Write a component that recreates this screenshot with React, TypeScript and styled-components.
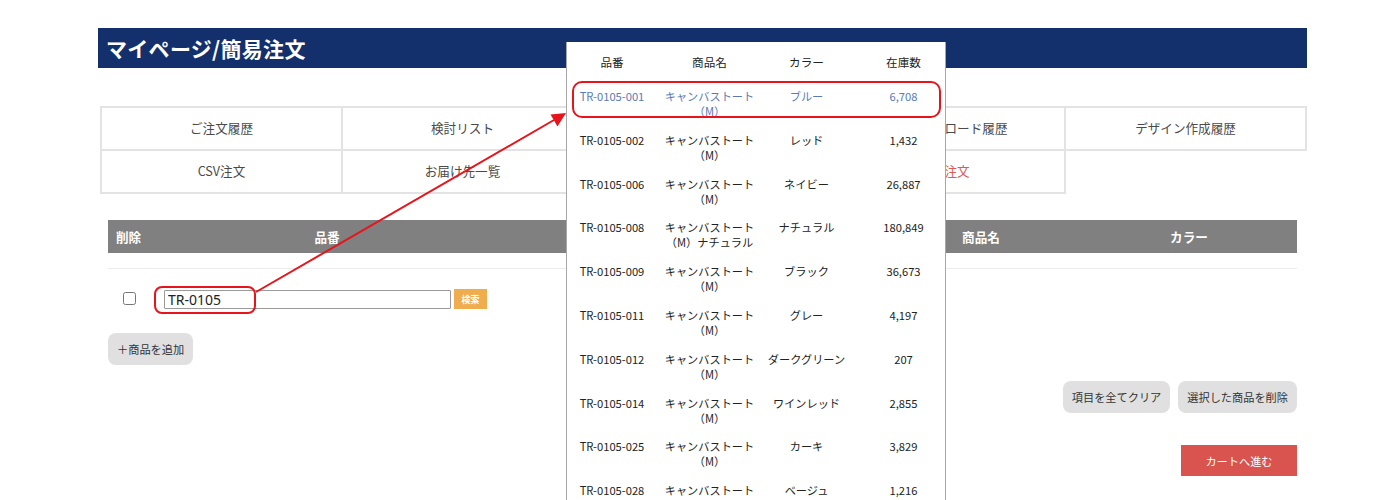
import React from "react";
import styled, { createGlobalStyle } from "styled-components";

const GlobalStyle = createGlobalStyle`
  html, body { margin: 0; padding: 0; background: #fff; overflow: hidden; }
  body { font-family: "Noto Sans CJK JP", "Noto Sans", sans-serif; color: #333; }
  * { box-sizing: border-box; }
`;

const Page = styled.div`
  position: relative;
  width: 1400px;
  height: 500px;
  overflow: hidden;
`;

const Container = styled.div`
  width: 1209px;
  margin-left: 98px;
  padding-top: 28px;
`;

const TitleBar = styled.h1`
  margin: 0;
  height: 40px;
  background: #13306c;
  color: #fff;
  font-size: 21px;
  font-weight: 700;
  line-height: 40px;
  padding-left: 8px;
  letter-spacing: 0.3px;
`;

const NavGrid = styled.nav`
  margin: 38px 2px 0;
  display: grid;
  grid-template-columns: repeat(5, 241px);
  border-top: 2px solid #e3e3e3;
  border-left: 2px solid #e3e3e3;
  width: max-content;
`;

const NavCell = styled.div<{ $active?: boolean }>`
  height: 43px;
  display: flex;
  align-items: center;
  justify-content: center;
  padding-bottom: 3px;
  border-right: 2px solid #e3e3e3;
  border-bottom: 2px solid #e3e3e3;
  font-size: 12.6px;
  color: ${(p) => (p.$active ? "#e05a52" : "#4a4a4a")};
`;

const TableSection = styled.section`
  padding: 0 10px;
  margin-top: 26px;
`;

const cols = "42px 354px 377px 200px 216px";

const TableHead = styled.div`
  display: grid;
  grid-template-columns: ${cols};
  height: 33px;
  background: #808080;
  color: #fff;
  font-size: 12.6px;
  font-weight: 700;
  align-items: center;
`;

const HeadCell = styled.div<{ $left?: boolean }>`
  text-align: ${(p) => (p.$left ? "left" : "center")};
  padding-left: ${(p) => (p.$left ? "8px" : "0")};
`;

const Divider = styled.div`
  margin-top: 15px;
  border-top: 1px solid #ececec;
`;

const DataRow = styled.div`
  display: grid;
  grid-template-columns: ${cols};
  padding: 20px 0;
  align-items: center;
`;

const CheckCell = styled.div`
  display: flex;
  justify-content: center;
  align-items: center;
  padding-bottom: 2px;
  input { margin: 0; width: 13px; height: 13px; }
`;

const CodeCell = styled.div`
  display: flex;
  align-items: center;
  gap: 3px;
  padding-left: 14px;
`;

const CodeInput = styled.input`
  width: 287px;
  height: 19px;
  border: 1px solid #9a9a9a;
  border-radius: 1px;
  padding: 0 3px;
  font-family: "Noto Sans", "DejaVu Sans", sans-serif;
  font-size: 14px;
  color: #222;
  outline: none;
`;

const SearchButton = styled.button`
  width: 33px;
  height: 20px;
  border: none;
  background: #f0ad4e;
  color: #fff;
  font-family: "Noto Sans CJK JP", sans-serif;
  font-size: 9px;
  font-weight: 700;
  padding: 0;
`;

const GrayButton = styled.button`
  height: 32px;
  padding: 0 9px;
  border: none;
  border-radius: 8px;
  background: #e0e0e0;
  color: #333;
  font-family: "Noto Sans CJK JP", sans-serif;
  font-size: 11.2px;
`;

const AddRow = styled.div`
  margin-top: 4px;
  display: flex;
`;

const RightRow = styled.div<{ $top: number }>`
  margin-top: ${(p) => p.$top}px;
  display: flex;
  justify-content: flex-end;
  gap: 8px;
`;

const CartButton = styled.button`
  width: 116px;
  height: 31px;
  border: none;
  background: #d9534f;
  color: #fff;
  font-family: "Noto Sans CJK JP", sans-serif;
  font-size: 11.2px;
`;

/* ---------- popup ---------- */
const Popup = styled.div`
  position: absolute;
  left: 566px;
  top: 42px;
  width: 380px;
  height: 458px;
  overflow: hidden;
  background: #fff;
  border-left: 1px solid #a8a8a8;
  border-right: 1px solid #a8a8a8;
  font-size: 11.2px;
  color: #222;
`;

const pcols = "90px 105px 89px 105px";

const PopHead = styled.div`
  display: grid;
  grid-template-columns: ${pcols};
  height: 40px;
  align-items: center;
  text-align: center;
  font-size: 11.6px;
`;

const PopRow = styled.div<{ $hl?: boolean }>`
  display: grid;
  grid-template-columns: ${pcols};
  padding: 7px 0 6.8px;
  line-height: 15px;
  text-align: center;
  color: ${(p) => (p.$hl ? "#5a79b6" : "#222")};
`;

const Annot = styled.div<{ $r: number }>`
  position: absolute;
  border: 2px solid #e8141b;
  border-radius: ${(p) => p.$r}px;
  pointer-events: none;
`;

const ArrowSvg = styled.svg`
  position: absolute;
  left: 0;
  top: 0;
  pointer-events: none;
`;

const navRow1 = ["ご注文履歴", "検討リスト", "お気に入り", "ロゴダウンロード履歴", "デザイン作成履歴"];
const navRow2 = ["CSV注文", "お届け先一覧", "よくあるご質問", "簡易注文"];

const items: [string, string, string, string][] = [
  ["TR-0105-001", "（M）", "ブルー", "6,708"],
  ["TR-0105-002", "（M）", "レッド", "1,432"],
  ["TR-0105-006", "（M）", "ネイビー", "26,887"],
  ["TR-0105-008", "（M）ナチュラル", "ナチュラル", "180,849"],
  ["TR-0105-009", "（M）", "ブラック", "36,673"],
  ["TR-0105-011", "（M）", "グレー", "4,197"],
  ["TR-0105-012", "（M）", "ダークグリーン", "207"],
  ["TR-0105-014", "（M）", "ワインレッド", "2,855"],
  ["TR-0105-025", "（M）", "カーキ", "3,829"],
  ["TR-0105-028", "（M）", "ベージュ", "1,216"],
];

export default function App() {
  return (
    <Page>
      <GlobalStyle />
      <Container>
        <TitleBar>マイページ/簡易注文</TitleBar>
        <NavGrid>
          {navRow1.map((t) => (
            <NavCell key={t}>{t}</NavCell>
          ))}
          {navRow2.map((t) => (
            <NavCell key={t} $active={t === "簡易注文"}>
              {t}
            </NavCell>
          ))}
        </NavGrid>
        <TableSection>
          <TableHead>
            <HeadCell $left>削除</HeadCell>
            <HeadCell>品番</HeadCell>
            <HeadCell>数量</HeadCell>
            <HeadCell>商品名</HeadCell>
            <HeadCell>カラー</HeadCell>
          </TableHead>
          <Divider />
          <DataRow>
            <CheckCell>
              <input type="checkbox" />
            </CheckCell>
            <CodeCell>
              <CodeInput defaultValue="TR-0105" />
              <SearchButton>検索</SearchButton>
            </CodeCell>
          </DataRow>
          <AddRow>
            <GrayButton>＋商品を追加</GrayButton>
          </AddRow>
          <RightRow $top={16}>
            <GrayButton>項目を全てクリア</GrayButton>
            <GrayButton>選択した商品を削除</GrayButton>
          </RightRow>
          <RightRow $top={32}>
            <CartButton>カートへ進む</CartButton>
          </RightRow>
        </TableSection>
      </Container>

      <Popup>
        <PopHead>
          <div>品番</div>
          <div>商品名</div>
          <div>カラー</div>
          <div>在庫数</div>
        </PopHead>
        {items.map(([code, sub, color, stock], i) => (
          <PopRow key={code} $hl={i === 0}>
            <div>{code}</div>
            <div>
              キャンバストート
              <br />
              {sub}
            </div>
            <div>{color}</div>
            <div>{stock}</div>
          </PopRow>
        ))}
      </Popup>

      <Annot $r={10} style={{ left: 572, top: 81, width: 369, height: 37 }} />
      <Annot $r={8} style={{ left: 154, top: 286, width: 102, height: 28 }} />
      <ArrowSvg width="1400" height="500" viewBox="0 0 1400 500">
        <line x1="256" y1="292" x2="554" y2="120" stroke="#e8141b" strokeWidth="2" />
        <polygon points="566,113 557.5,126.5 550.5,114.5" fill="#e8141b" />
      </ArrowSvg>
    </Page>
  );
}
